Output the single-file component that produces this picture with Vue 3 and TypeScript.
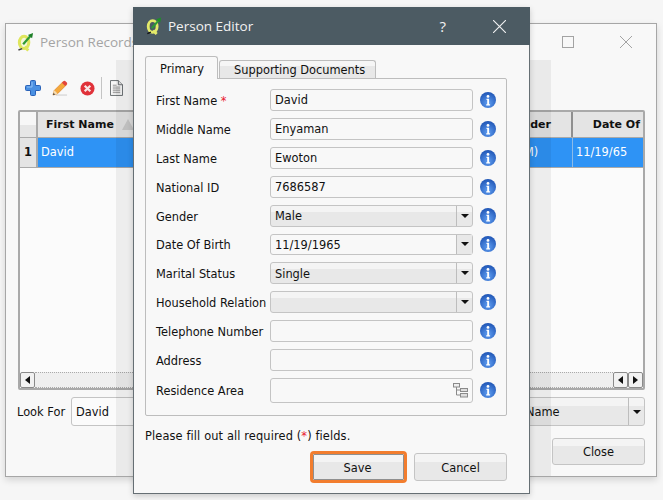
<script setup lang="ts">
interface Field {
  label: string
  value: string
  kind: 'text' | 'combo' | 'date' | 'tree'
  required?: boolean
}

const fields: Field[] = [
  { label: 'First Name', value: 'David', kind: 'text', required: true },
  { label: 'Middle Name', value: 'Enyaman', kind: 'text' },
  { label: 'Last Name', value: 'Ewoton', kind: 'text' },
  { label: 'National ID', value: '7686587', kind: 'text' },
  { label: 'Gender', value: 'Male', kind: 'combo' },
  { label: 'Date Of Birth', value: '11/19/1965', kind: 'date' },
  { label: 'Marital Status', value: 'Single', kind: 'combo' },
  { label: 'Household Relation', value: '', kind: 'combo' },
  { label: 'Telephone Number', value: '', kind: 'text' },
  { label: 'Address', value: '', kind: 'text' },
  { label: 'Residence Area', value: '', kind: 'tree' },
]
</script>

<template>
  <div class="desktop">
    <section class="window back">
      <header class="back-title">
        <svg class="qgis" viewBox="0 0 18 20" width="17" height="20">
          <ellipse cx="7.500" cy="10.500" rx="5" ry="6.500" fill="#f4f6d8" stroke="#dfe65c" stroke-width="3.200" />
          <path d="M8 15l4 4" stroke="#dfe65c" stroke-width="3.200" />
          <path d="M1.500 18.500l4-1.500" stroke="#444" stroke-width="1.500" />
          <path d="M6.500 12.500L14 4" stroke="#2f9a35" stroke-width="2.400" />
          <path d="M11.500 2.500L17 .5l-1 5.500z" fill="#1d7f28" />
        </svg>
        <span class="back-name">Person Records</span>
        <svg class="max" viewBox="0 0 12 12" width="12" height="12"><rect x=".5" y=".5" width="11" height="11" fill="none" stroke="#a3a3a3" /></svg>
        <svg class="close" viewBox="0 0 12 12" width="12" height="12"><path d="M0 0l12 12M12 0L0 12" stroke="#a3a3a3" stroke-width="1" /></svg>
      </header>

      <div class="toolbar">
        <svg viewBox="0 0 16 16" width="16" height="16">
          <path d="M5.500 1.500q0-1 1-1h3q1 0 1 1v4h4q1 0 1 1v3q0 1-1 1h-4v4q0 1-1 1h-3q-1 0-1-1v-4h-4q-1 0-1-1v-3q0-1 1-1h4z" fill="#4a90e2" stroke="#2a62b8" />
          <path d="M7 2v5H2" fill="none" stroke="#8fc0f5" />
        </svg>
        <svg viewBox="0 0 17 17" width="16" height="16">
          <path d="M4 16h12" stroke="#d8d8d8" stroke-width="1.500" />
          <path d="M1 16l1.500-5L12 1.500 15.500 5 6 14.500z" fill="#f5a93c" stroke="#d9822b" stroke-width=".7" />
          <path d="M12 1.500q1-1 2-.5l2 2q.5 1-.5 2L14 6.500 10.500 3z" fill="#e2453c" />
          <path d="M1 16l1.500-5 3.500 3.500z" fill="#f6dcb0" />
          <path d="M1 16l.7-2.300 1.600 1.600z" fill="#333" />
        </svg>
        <svg viewBox="0 0 16 16" width="15" height="15">
          <circle cx="8" cy="8" r="7.500" fill="#e0323a" />
          <path d="M5 5l6 6M11 5l-6 6" stroke="#f7e6e6" stroke-width="2.400" />
        </svg>
        <i class="tool-sep"></i>
        <svg viewBox="0 0 14 17" width="13" height="16">
          <path d="M.5 .5h8.500l4.500 4.500v11.500H.5z" fill="#f7f7f7" stroke="#5f6468" />
          <path d="M9 .5v4.500h4.500" fill="#ddd" stroke="#5f6468" />
          <path d="M3 5.500h4M3 7.500h8M3 9.500h8M3 11.500h8M3 13.500h8" stroke="#8a8a8a" />
        </svg>
      </div>

      <div class="table">
        <div class="thead">
          <div class="corner"></div>
          <div class="th first">First Name<span class="sort"></span></div>
          <div class="th gender">Gender</div>
          <div class="th date">Date Of</div>
        </div>
        <div class="tbody">
          <div class="rowhead">1</div>
          <div class="td first">David</div>
          <div class="td gender">Male (M)</div>
          <div class="td date">11/19/65</div>
        </div>
        <div class="spacer"></div>
        <div class="hscroll">
          <span class="sbtn"><i class="tri left"></i></span>
          <span class="track"></span>
          <span class="sbtn"><i class="tri left"></i></span>
          <span class="sbtn"><i class="tri right"></i></span>
        </div>
      </div>

      <div class="search">
        <span class="look">Look For</span>
        <div class="search-input">David</div>
        <div class="combo search-combo">
          <span class="combo-text">Name</span>
          <span class="arrow"><i class="tri down"></i></span>
        </div>
      </div>

      <div class="back-foot"><button class="btn close-btn">Close</button></div>
      <div class="scrim"></div>
    </section>

    <section class="window dialog">
      <header class="dlg-title">
        <svg class="qgis" viewBox="0 0 18 20" width="16" height="18">
          <ellipse cx="7.500" cy="10.500" rx="5" ry="6.500" fill="#4c5b63" stroke="#e4ea6a" stroke-width="3.200" />
          <path d="M8 15l4 4" stroke="#e4ea6a" stroke-width="3.200" />
          <path d="M1.500 18.500l4-1.500" stroke="#111" stroke-width="1.500" />
          <path d="M6.500 12.500L14 4" stroke="#2f9a35" stroke-width="2.400" />
          <path d="M11.500 2.500L17 .5l-1 5.500z" fill="#1d8f28" />
        </svg>
        <span class="dlg-name">Person Editor</span>
        <span class="help">?</span>
        <svg class="dlg-close" viewBox="0 0 13 13" width="13" height="13"><path d="M0 0l13 13M13 0L0 13" stroke="#f2f2f2" stroke-width="1.100" /></svg>
      </header>

      <div class="dlg-body">
        <div class="tabs">
          <div class="tab active">Primary</div>
          <div class="tab">Supporting Documents</div>
        </div>

        <div class="pane">
          <div
            v-for="f in fields"
            :key="f.label"
            class="row"
            :class="{ 'row-combo': f.kind === 'combo' || f.kind === 'date', 'row-tree': f.kind === 'tree' }"
          >
            <label class="lbl">{{ f.label }}<span v-if="f.required" class="req"> *</span></label>
            <div v-if="f.kind === 'text'" class="input">{{ f.value }}</div>
            <div v-else-if="f.kind === 'tree'" class="input tree-input">
              <svg viewBox="0 0 15 15" width="15" height="15" class="tree">
                <rect x=".5" y=".5" width="6" height="3.500" fill="#eee" stroke="#8a8a8a" />
                <rect x="7.500" y="5.500" width="7" height="3" fill="#ddd" stroke="#8a8a8a" />
                <rect x="7.500" y="10.500" width="7" height="3.500" fill="#ddd" stroke="#8a8a8a" />
                <path d="M3.500 4v8h4M3.500 7h4" fill="none" stroke="#8a8a8a" />
              </svg>
            </div>
            <div v-else class="combo" :class="{ editable: f.kind === 'date' }">
              <span class="combo-text">{{ f.value }}</span>
              <span class="arrow"><i class="tri down"></i></span>
            </div>
            <svg class="info" viewBox="0 0 16 16" width="16" height="16">
              <defs>
                <radialGradient id="ig" cx=".5" cy=".7" r=".75">
                  <stop offset="0" stop-color="#5f9ef2" />
                  <stop offset="1" stop-color="#1a4fb0" />
                </radialGradient>
              </defs>
              <circle cx="8" cy="8" r="8" fill="url(#ig)" />
              <circle cx="8" cy="4.400" r="1.400" fill="#fff" />
              <path d="M6.500 6.800h2.600v5.400h1v1.200H6.200v-1.200h1v-4.200h-.7z" fill="#fff" />
            </svg>
          </div>
        </div>

        <p class="note">Please fill out all required (<span class="req">*</span>) fields.</p>

        <div class="actions">
          <button class="btn save">Save</button>
          <button class="btn cancel">Cancel</button>
        </div>
      </div>
    </section>
  </div>
</template>

<style>
html, body { margin: 0; background: #f6f6f6; overflow: hidden; }
</style>

<style scoped>
.desktop {
  position: relative;
  width: 663px;
  height: 500px;
  overflow: hidden;
  font-family: "DejaVu Sans", sans-serif;
  font-size: 11.4px;
  color: #111;
  background: #f6f6f6;
}
.window { position: absolute; box-sizing: border-box; background: #f8f8f8; }
.back {
  left: 5px; top: 23px; width: 652px; height: 454px;
  border: 1px solid #a6a6a6;
  box-shadow: 0 3px 7px rgba(0, 0, 0, .14);
  padding: 0 11px;
  display: flex; flex-direction: column;
}
.back-title { display: flex; align-items: center; height: 36px; }
.back-title .qgis { flex: none; }
.back-name { margin-left: 6px; font-family: "Open Sans", sans-serif; font-size: 13.5px; color: #a4a4a4; white-space: nowrap; }
.max { margin-left: auto; margin-right: 46px; }
.close { margin-right: 13px; }
.toolbar { display: flex; align-items: center; height: 30px; padding-left: 8px; margin-top: 13px; box-sizing: border-box; }
.toolbar svg:nth-child(2) { margin-left: 11px; }
.toolbar svg:nth-child(3) { margin-left: 12px; }
.tool-sep { width: 1px; height: 22px; background: #c4c4c4; margin: 0 8px 0 6px; }
.table {
  box-sizing: border-box;
  height: 280px;
  margin-top: 7px;
  margin-left: 1px;
  border: 2px solid #a9a9a9;
  border-radius: 2px;
  background: #fbfbfb;
  display: flex; flex-direction: column;
  width: 627px;
}
.thead { display: flex; height: 25px; background: #e4e4e4; border-bottom: 1px solid #a9a9a9; flex: none; }
.corner { width: 16px; background: linear-gradient(#f7f7f7 50%, #e6e6e6 50%); border-right: 2px solid #a9a9a9; flex: none; }
.th { font-weight: 700; font-size: 11px; line-height: 25px; box-sizing: border-box; }
.first { width: 118px; flex: none; }
.gender { width: 417px; flex: none; }
.date { flex: 1; }
.th.first { padding-left: 8px; position: relative; }
.sort {
  position: absolute; left: 84px; top: 7px; width: 0; height: 0;
  border-left: 6px solid transparent; border-right: 6px solid transparent;
  border-bottom: 11px solid #c9c9c9;
}
.th.gender { text-align: right; padding-right: 20px; border-right: 2px solid #8f8f8f; }
.th.date { text-align: right; padding-right: 3px; }
.tbody { display: flex; height: 30px; flex: none; background: #2e93f5; color: #fff; line-height: 28px; border-bottom: 1px solid #a9a9a9; box-sizing: border-box; }
.rowhead { width: 18px; box-sizing: border-box; flex: none; text-align: center; font-weight: 700; color: #111; background: #e4e4e4; border-right: 2px solid #a9a9a9; }
.td { box-sizing: border-box; padding-left: 3px; }
.td.gender { padding-left: 333px; border-right: 1px solid #8bbbe8; }
.spacer { flex: 1; }
.hscroll { display: flex; height: 16px; flex: none; }
.sbtn { width: 15px; box-sizing: border-box; border: 1px solid #8a8a8a; border-radius: 2px; background: #f2f2f2; display: flex; align-items: center; justify-content: center; flex: none; }
.track { flex: 1; background: #efefef; border-top: 1px dotted #aaa; border-bottom: 1px dotted #aaa; }
.tri { display: block; width: 0; height: 0; }
.tri.left { border-top: 4px solid transparent; border-bottom: 4px solid transparent; border-right: 5px solid #111; }
.tri.right { border-top: 4px solid transparent; border-bottom: 4px solid transparent; border-left: 5px solid #111; }
.tri.down { border-left: 4.500px solid transparent; border-right: 4.500px solid transparent; border-top: 4px solid #111; }
.search { display: flex; align-items: center; height: 29px; margin-top: 7px; }
.look { width: 54px; flex: none; padding-top: 1px; }
.search-input { box-sizing: border-box; width: 130px; height: 29px; line-height: 28px; padding-left: 4px; border: 1px solid #c4c4c4; border-radius: 3px; background: #fbfbfb; flex: none; }
.combo.search-combo { flex: 1; width: auto; height: 29px; margin-left: 4px; }
.search-combo .combo-text { padding-left: 320px; padding-top: 1px; }
.back-foot { display: flex; justify-content: flex-end; margin-top: 12px; }
.close-btn { width: 93px; height: 27px; padding-top: 1px; }
.scrim { position: absolute; left: 110px; right: 105px; top: 36px; bottom: 0; background: rgba(0, 0, 0, .055); pointer-events: none; }

.btn {
  font: inherit; color: #111; box-sizing: border-box; padding: 0;
  border: 1px solid #c4c4c4; border-radius: 3px;
  background: linear-gradient(#f4f4f4 30%, #e8e8e8 30%);
}
.dialog {
  left: 133px; top: 7px; width: 397px; height: 487px;
  border: 1px solid #666f74; border-top: 0;
  box-shadow: 0 2px 6px rgba(0, 0, 0, .18);
  background: #f8f8f8;
}
.dlg-title { display: flex; align-items: center; height: 38px; margin: 0 -1px; padding-left: 13px; background: #4c5b63; color: #f2f2f2; }
.dlg-name { margin-left: 6px; font-family: "Open Sans", sans-serif; font-size: 13.5px; }
.help { margin-left: auto; margin-right: 47px; font-family: "Open Sans", sans-serif; font-size: 15px; }
.dlg-close { margin-right: 24px; }
.dlg-body { padding: 11px 22px 0 11px; }
.tabs { display: flex; align-items: flex-end; height: 22px; position: relative; z-index: 1; }
.tab { box-sizing: border-box; height: 18px; line-height: 19px; padding: 0 14px; width: 157px; text-align: center; border: 1px solid #bdbdbd; border-bottom: 0; border-radius: 3px 3px 0 0; background: linear-gradient(#f6f6f6 30%, #e8e8e8 30%); white-space: nowrap; margin-left: 1px; }
.tab.active { height: 23px; line-height: 25px; margin: 0 0 -1px 0; background: #f8f8f8; padding: 0 14px; width: 73px; text-align: center; }
.pane { box-sizing: border-box; height: 338px; border: 1px solid #bdbdbd; border-radius: 2px; padding: 10px 0 0 10px; display: flex; flex-direction: column; gap: 7px; }
.row { display: flex; align-items: center; height: 22px; flex: none; }
.row-combo { height: 21.670px; }
.row-tree { height: 25px; }
.lbl { width: 114px; flex: none; white-space: nowrap; padding-top: 2px; }
.req { color: #e8202f; }
.input { box-sizing: border-box; width: 203px; height: 100%; line-height: 21px; padding-left: 4px; border: 1px solid #c4c4c4; border-radius: 3px; background: #f8f8f8; flex: none; }
.tree-input { display: flex; align-items: center; justify-content: flex-end; padding-right: 4px; }
.combo { box-sizing: border-box; display: flex; width: 203px; height: 100%; border: 1px solid #c4c4c4; border-radius: 3px; background: linear-gradient(#f4f4f4 30%, #e8e8e8 30%); flex: none; }
.combo.editable { background: #f8f8f8; }
.combo-text { flex: 1; padding-left: 4px; padding-top: 1px; display: flex; align-items: center; white-space: nowrap; overflow: hidden; }
.arrow { width: 15px; flex: none; border-left: 1px solid #bdbdbd; display: flex; align-items: center; justify-content: center; }
.combo.editable .arrow { background: #e8e8e8; }
.info { margin-left: 7px; flex: none; }
.note { margin: 13px 0 0; line-height: 14px; letter-spacing: .12px; }
.actions { display: flex; justify-content: flex-end; align-items: center; gap: 10px; margin-top: 10px; height: 28px; }
.save { width: 91px; height: 26px; outline: 3px solid #f27d2e; border-radius: 1px; border-color: #8f8f8f; padding-top: 1px; padding-right: 2px; }
.cancel { width: 93px; height: 28px; padding-top: 1px; }
</style>
